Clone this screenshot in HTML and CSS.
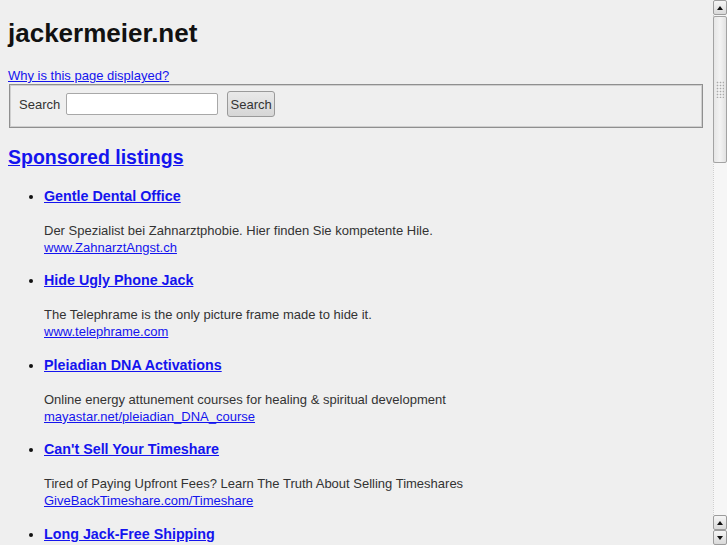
FILE: index.html
```html
<!DOCTYPE html>
<html lang="en">
<head>
<meta charset="utf-8">
<title>jackermeier.net</title>
<link rel="stylesheet" href="styles.css">
</head>
<body>
<div class="window">
  <main class="page">
    <h1 class="site">jackermeier.net</h1>
    <a class="why" href="#">Why is this page displayed?</a>
    <form class="search-form">
      <fieldset class="search-box">
        <label class="search-label" for="q">Search</label>
        <input class="search-input" id="q" type="text">
        <button class="search-button" type="button">Search</button>
      </fieldset>
    </form>
    <h2 class="sponsored"><a href="#">Sponsored listings</a></h2>
    <ul class="listings">
      <li class="ad">
        <h3 class="ad-title"><a href="#">Gentle Dental Office</a></h3>
        <p class="ad-desc">Der Spezialist bei Zahnarztphobie. Hier finden Sie kompetente Hile.<br><a href="#">www.ZahnarztAngst.ch</a></p>
      </li>
      <li class="ad">
        <h3 class="ad-title"><a href="#">Hide Ugly Phone Jack</a></h3>
        <p class="ad-desc">The Telephrame is the only picture frame made to hide it.<br><a href="#">www.telephrame.com</a></p>
      </li>
      <li class="ad">
        <h3 class="ad-title"><a href="#">Pleiadian DNA Activations</a></h3>
        <p class="ad-desc">Online energy attunement courses for healing &amp; spiritual development<br><a href="#">mayastar.net/pleiadian_DNA_course</a></p>
      </li>
      <li class="ad">
        <h3 class="ad-title"><a href="#">Can't Sell Your Timeshare</a></h3>
        <p class="ad-desc">Tired of Paying Upfront Fees? Learn The Truth About Selling Timeshares<br><a href="#">GiveBackTimeshare.com/Timeshare</a></p>
      </li>
      <li class="ad">
        <h3 class="ad-title"><a href="#">Long Jack-Free Shipping</a></h3>
      </li>
    </ul>
  </main>
  <div class="scrollbar">
    <div class="sb-btn sb-up"></div>
    <div class="sb-track">
      <div class="sb-thumb"><span class="sb-grip"></span></div>
    </div>
    <div class="sb-btn sb-up"></div>
    <div class="sb-btn sb-down"></div>
  </div>
</div>
</body>
</html>
```

FILE: styles.css
```css
html, body {
  margin: 0;
  padding: 0;
  height: 545px;
  overflow: hidden;
  background: #efefef;
}

body {
  font-family: "Liberation Sans", Arial, sans-serif;
  font-size: 13px;
  color: #333;
}

a {
  color: #1414ee;
  text-decoration: underline;
}

.window {
  display: flex;
  height: 545px;
}

.page {
  flex: 1;
  min-width: 0;
  padding: 0 8px;
  overflow: hidden;
}

.site {
  margin: 18px 0 0;
  font-size: 26px;
  line-height: 30px;
  font-weight: bold;
  color: #111;
}

.why {
  display: block;
  width: max-content;
  margin-top: 20px;
  line-height: 15px;
}

.search-form {
  margin: 1px 2px 0 1px;
}

.search-box {
  margin: 0;
  padding: 6px 9px 10px 9px;
  border: 1px solid #8f8f8f;
  box-shadow: inset 0 0 0 1px #cfcfcf;
  display: flex;
  align-items: center;
  min-width: 0;
}

.search-label {
  line-height: 15px;
  color: #333;
}

.search-input {
  box-sizing: border-box;
  width: 152px;
  height: 22px;
  margin: 0 0 0 6px;
  padding: 0 3px;
  border: 1px solid #a8a8a8;
  border-radius: 2px;
  background: #fff;
  font: 13px "Liberation Sans", Arial, sans-serif;
}

.search-button {
  box-sizing: border-box;
  width: 48px;
  height: 26px;
  margin: 0 0 0 9px;
  padding: 0;
  border: 1px solid #9a9a9a;
  border-radius: 3px;
  background: linear-gradient(#e9e9e9, #d6d6d6);
  font: 13px "Liberation Sans", Arial, sans-serif;
  color: #333;
}

.sponsored {
  margin: 18px 0 0;
  font-size: 19.5px;
  line-height: 22px;
  font-weight: bold;
}

.listings {
  margin: 20px 0 0;
  padding-left: 36px;
  list-style: disc;
  color: #111;
}

.ad {
  margin-bottom: 16.4px;
}

.ad-title {
  margin: 0;
  font-size: 14.3px;
  line-height: 16px;
  font-weight: bold;
}

.ad-desc {
  margin: 18px 0 0;
  font-size: 13px;
  line-height: 17px;
  color: #333;
}

/* fake GTK scrollbar */
.scrollbar {
  width: 14px;
  display: flex;
  flex-direction: column;
  background: #f4f4f4;
}

.sb-btn {
  box-sizing: border-box;
  height: 15px;
  border: 1px solid #9c9c9c;
  border-radius: 2px;
  background: linear-gradient(#f6f6f6, #d9d9d9);
  display: flex;
  align-items: center;
  justify-content: center;
}

.sb-btn::before {
  content: "";
  width: 0;
  height: 0;
  border-left: 3px solid transparent;
  border-right: 3px solid transparent;
}

.sb-up::before {
  border-bottom: 4px solid #111;
}

.sb-down::before {
  border-top: 4px solid #111;
}

.sb-track {
  flex: 1;
  border-left: 1px dotted #cfcfcf;
  background: #f6f6f6;
  padding-top: 1px;
}

.sb-thumb {
  box-sizing: border-box;
  height: 147px;
  margin-left: -1px;
  border: 1px solid #a3a3a3;
  border-radius: 2px;
  background: linear-gradient(90deg, #e6e6e6, #f3f3f3 50%, #e2e2e2);
  display: flex;
  align-items: center;
  justify-content: center;
}

.sb-grip {
  width: 8px;
  height: 17px;
  background-image: radial-gradient(circle, #a9a9a9 0.7px, transparent 1.1px);
  background-size: 3px 3px;
}
```
